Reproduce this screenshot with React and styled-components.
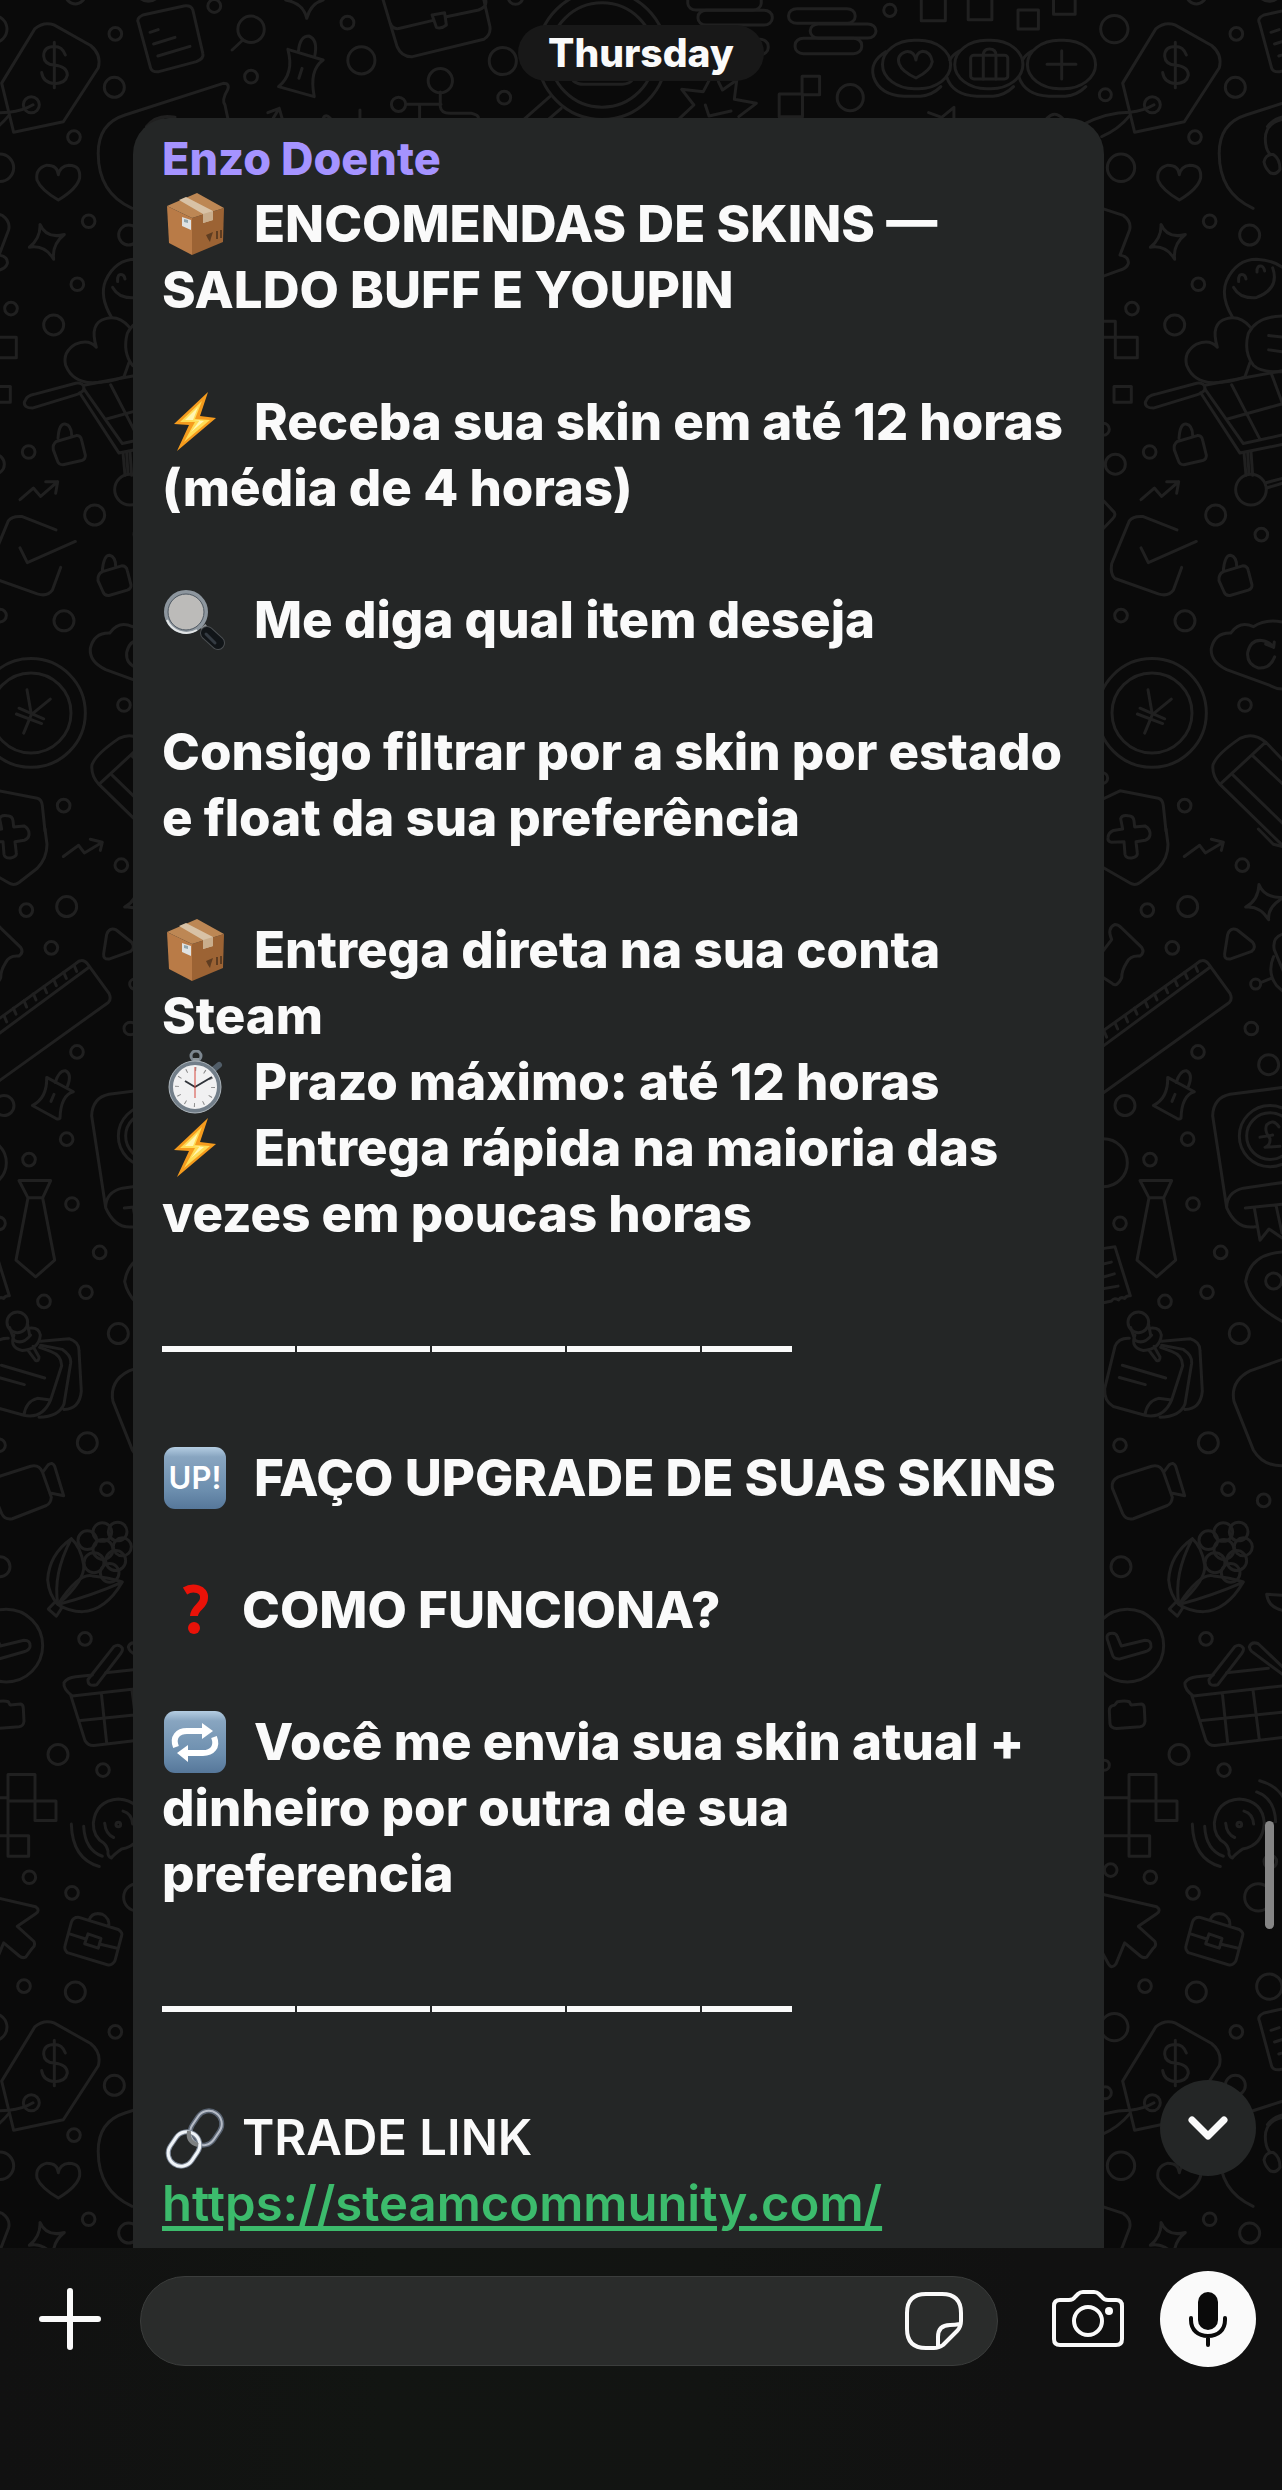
import { useState } from "react";
import styled, { createGlobalStyle } from "styled-components";

const GlobalStyle = createGlobalStyle`
    * {
        box-sizing: border-box;
    }
    body {
        margin: 0;
        background: #0a0a0a;
        font-family: Inter, "Liberation Sans", sans-serif;
    }
`;

const Screen = styled.div`
    display: flex;
    flex-direction: column;
    height: 100vh;
    color: #fafafa;
`;

const Chat = styled.main`
    position: relative;
    flex: 1;
    min-height: 0;
    overflow: hidden;
    display: flex;
    flex-direction: column;
    padding: 25px 178px 0 133px;
`;

const Wallpaper = styled.svg`
    position: absolute;
    inset: 0;
    width: 100%;
    height: 100%;
    z-index: -1;
    fill: none;
    stroke: #202020;
    stroke-width: 3;
    stroke-linecap: round;
    stroke-linejoin: round;

    path, ellipse, rect {
        vector-effect: non-scaling-stroke;
    }
`;

const DayPill = styled.time`
    align-self: center;
    margin: 0 0 37px 45px;
    padding: 0 30px;
    border-radius: 28px;
    background: #181818;
    font-size: 39px;
    font-weight: 800;
    line-height: 56px;
`;

const Bubble = styled.article`
    padding: 13px 29px 0;
    border-radius: 36px;
    background: #242626;
    white-space: nowrap;
`;

const Sender = styled.h2`
    margin: 0 0 4px;
    color: #a593ff;
    font-size: 45px;
    font-weight: 800;
    line-height: 56px;
`;

const Message = styled.div`
    display: flex;
    flex-direction: column;
    gap: 66px;
    padding-bottom: 66px;
    line-height: 66px;
`;

const Paragraph = styled.div``;

const Line = styled.p`
    display: flex;
    align-items: center;
    gap: ${({ $tight }) => ($tight ? 16 : 28)}px;
    height: 66px;
    margin: 0;
    font-size: ${({ $plain }) => ($plain ? 49 : 51)}px;
    font-weight: ${({ $plain }) => ($plain ? 600 : 800)};

    svg {
        flex: none;
        width: 64px;
        height: 64px;
    }
`;

const Divider = styled.hr`
    width: 630px;
    height: 6px;
    margin: 33px 0 27px;
    border: 0;
    background: repeating-linear-gradient(90deg, #fafafa 0 133px, #242626 133px 135px);
`;

const Link = styled.a`
    color: #3cbb6c;
    text-decoration: underline;
    text-decoration-thickness: 5px;
    text-underline-offset: 5px;
`;

const DownButton = styled.button`
    position: absolute;
    right: 26px;
    bottom: 72px;
    display: grid;
    place-items: center;
    width: 96px;
    height: 96px;
    padding: 0;
    border: 0;
    border-radius: 50%;
    background: #242626;
`;

const ScrollThumb = styled.div`
    position: absolute;
    right: 8px;
    bottom: 319px;
    width: 9px;
    height: 108px;
    border-radius: 5px;
    background: #858585;
`;

const Composer = styled.form`
    display: flex;
    align-items: flex-start;
    height: 242px;
    padding: 23px 26px 0 38px;
    background: linear-gradient(90deg, #111 0, #121512 30%, #121412 55%, #111 80%);
`;

const IconButton = styled.button`
    display: grid;
    place-items: center;
    flex: none;
    width: ${({ $width }) => $width}px;
    height: 96px;
    padding: 0;
    border: 0;
    border-radius: 50%;
    background: ${({ $filled }) => ($filled ? "#fafafa" : "none")};
`;

const Actions = styled.div`
    display: flex;
    gap: 36px;
`;

const Field = styled.label`
    display: flex;
    align-items: center;
    flex: 1;
    min-width: 0;
    height: 90px;
    margin: 5px 54px 0 38px;
    padding: 0 33px 0 40px;
    border: 1px solid #3b3d3c;
    border-radius: 45px;
    background: #2a2c2b;
`;

const TextBox = styled.input`
    flex: 1;
    min-width: 0;
    height: 80px;
    border: 0;
    outline: 0;
    background: none;
    color: #fafafa;
    font: 500 46px Inter, "Liberation Sans", sans-serif;
`;

/* ---------- emoji ---------- */

function BoxEmoji() {
    return (
        <svg viewBox="0 0 64 64" aria-hidden="true">
            <path d="M5 14 30 26 30 63 7 51Z" fill="#b97b47" />
            <path d="M30 26 62 16 61 50 30 63Z" fill="#9c6334" />
            <path d="M5 14 35 1 62 16 30 26Z" fill="#bd8754" />
            <path d="M17 8 24 5 51 19 51 28 41 31 41 22Z" fill="#d8c2a6" />
            <path d="M41 22 51 19 51 28 41 31Z" fill="#c9ad8c" />
            <path d="M20 25 29 28 29 38 20 34Z" fill="#dfe2e3" />
            <path d="M22 27 26 28 26 31 22 30Z" fill="#90a5ad" />
            <path d="M44 43 51 40 49 46 48 50 46 47Z" fill="#5f3d21" />
            <path d="M55 39V47M59 38V46" stroke="#5f3d21" strokeWidth="2" />
        </svg>
    );
}

function BoltEmoji() {
    return (
        <svg viewBox="0 0 64 64" aria-hidden="true">
            <path d="M46 2 12 34 27 35 15 61 54 28 38 26Z" fill="#f59b1d" />
            <path d="M40 11 18 32 33 32 22 52 48 30 33 29Z" fill="#ffdc55" />
            <path d="M36 17 23 30 38 30 29 42 42 31 31 30Z" fill="#fff6b0" />
        </svg>
    );
}

function LensEmoji() {
    return (
        <svg viewBox="0 0 64 64" aria-hidden="true">
            <path d="M40 42 45 38" stroke="#8b8f92" strokeWidth="5" />
            <path d="M45 45 56 55" stroke="#4b4f52" strokeWidth="14" strokeLinecap="round" />
            <path d="M45 45 56 55" stroke="#111518" strokeWidth="12" strokeLinecap="round" />
            <path d="M44 46 53 55" stroke="#343b42" strokeWidth="3" strokeLinecap="round" />
            <circle cx="24" cy="24" r="20" fill="#bcbbb9" stroke="#8d969e" strokeWidth="4" />
            <circle cx="24" cy="24" r="18" fill="none" stroke="#4d5761" strokeWidth="1" />
            <path d="M5 32A21 21 0 0 0 35 42" fill="none" stroke="#e1e4e5" strokeWidth="2" />
        </svg>
    );
}

function StopwatchEmoji() {
    return (
        <svg viewBox="0 0 64 64" aria-hidden="true">
            <circle cx="34" cy="6" r="5" fill="none" stroke="#7d8790" strokeWidth="3" />
            <path d="M31 8H37V13H31Z" fill="#8d969d" />
            <path d="M51 20 57 15" stroke="#515d68" strokeWidth="6" strokeLinecap="round" />
            <circle cx="33" cy="37" r="24" fill="#f1f1f2" stroke="#727e89" strokeWidth="4" />
            <circle cx="33" cy="37" r="26" fill="none" stroke="#abb3b9" strokeWidth="1" />
            <circle cx="33" cy="37" r="18" fill="none" stroke="#888" strokeWidth="4" strokeDasharray="1 8.4" />
            <path d="M23 31 33 37 50 27" fill="none" stroke="#30343a" strokeWidth="2" strokeLinejoin="round" />
            <path d="M33 17V48" stroke="#d5463c" strokeWidth="1" />
        </svg>
    );
}

function QuestionEmoji() {
    return (
        <svg viewBox="0 0 64 64" aria-hidden="true">
            <path d="M23 13C31 8 43 11 42 20C42 28 32 30 32 38" fill="none" stroke="#ea1208" strokeWidth="8" />
            <circle cx="32" cy="50" r="6" fill="#ea1208" />
        </svg>
    );
}

function BlueKey({ id, children }) {
    return (
        <svg viewBox="0 0 64 64" aria-hidden="true">
            <linearGradient id={id} x2="0" y2="1">
                <stop offset="0" stopColor="#b4cde2" />
                <stop offset=".16" stopColor="#88a5c0" />
                <stop offset=".7" stopColor="#6c8eae" />
                <stop offset="1" stopColor="#56779a" />
            </linearGradient>
            <rect x="2" y="1" width="62" height="62" rx="11" fill={`url(#${id})`} />
            {children}
        </svg>
    );
}

function UpEmoji() {
    return (
        <BlueKey id="upKey">
            <text x="33" y="43" fill="#fff" fontFamily="Inter" fontSize="31" fontWeight="600" textAnchor="middle">UP!</text>
        </BlueKey>
    );
}

function RepeatEmoji() {
    return (
        <BlueKey id="repeatKey">
            <path d="M14 37C10 27 16 21 25 21H44M52 27C56 37 50 43 41 43H22" fill="none" stroke="#fff" strokeWidth="6" />
            <path d="M40 13 51 21 40 29ZM26 35 15 43 26 52Z" fill="#fff" />
        </BlueKey>
    );
}

function ChainEmoji() {
    return (
        <svg viewBox="0 0 64 64" aria-hidden="true">
            <g fill="none">
                <rect x="31" y="4" width="26" height="36" rx="13" transform="rotate(34 44 22)" stroke="#596371" strokeWidth="5" />
                <rect x="31" y="4" width="26" height="36" rx="13" transform="rotate(34 44 22)" stroke="#b5bbc6" strokeWidth="2" />
                <rect x="9" y="25" width="26" height="36" rx="13" transform="rotate(34 22 43)" stroke="#7b8695" strokeWidth="5" />
                <rect x="9" y="25" width="26" height="36" rx="13" transform="rotate(34 22 43)" stroke="#f0f4f8" strokeWidth="3" />
                <path d="M27 25Q25 36 36 39" stroke="#7d8081" strokeWidth="4" />
            </g>
        </svg>
    );
}

/* ---------- wallpaper ---------- */

// each part of the tile has its own grid; [x, y, radius] in that grid
const PARTS = [
    {
        transform: "translate(-41 0) scale(.3333 .5293)",
        ratio: 0.63,
        rings: [
            [103, 55, 41], [469, 64, 19], [76, 179, 18], [466, 165, 30], [217, 198, 24], [345, 259, 19],
            [123, 317, 41], [389, 418, 19], [509, 444, 30], [355, 537, 19], [156, 583, 19], [284, 614, 30],
            [209, 854, 19], [106, 877, 30], [407, 973, 30], [544, 1010, 19], [123, 1163, 19], [315, 1173, 30],
            [216, 1347, 163], [216, 1347, 120], [495, 1332, 19], [314, 1522, 19], [513, 925, 46], [70, 811, 18], [67, 1470, 16],
        ],
        paths: [
            "M128 157L228 54Q255 40 285 47L395 86Q428 103 418 128L313 230L164 250Z",
            "M319 104Q310 88 286 88Q254 88 254 106Q256 122 286 123Q325 126 325 142Q320 158 286 158Q252 156 248 137M286 80V166",
            "M10 235Q80 212 150 212Q190 210 222 198M65 258Q115 245 150 218",
            "M298 330Q296 312 264 312Q228 318 234 340Q245 358 298 378Q355 356 362 336Q365 312 330 312Q302 314 298 330Z",
            "M243 424Q262 452 316 443Q278 462 284 490Q258 462 211 467Q245 450 243 424Z",
            "M612 225Q556 232 556 262Q556 280 568 290M552 306Q558 290 580 292Q600 300 600 320Q588 332 570 326Q556 318 552 306Z",
            "M40 390L72 395L130 407Q155 418 149 434L120 482Q148 485 145 498Q140 507 122 510L60 524",
            "M458 600Q420 560 440 530Q470 490 530 490Q590 492 620 512M461 543Q480 565 530 562Q600 545 578 506",
            "M476 532Q474 516 490 519Q496 520 498 527M531 514Q530 500 546 503Q552 505 554 512",
            "M412 656Q390 610 440 602Q480 595 511 618M412 656Q390 640 350 650Q310 665 320 690Q340 722 400 723Q450 723 495 712L510 685",
            "M612 597Q530 597 505 630Q490 665 520 690Q545 705 612 702M566 634L612 637M566 661L612 665",
            "M60 607H106V637H60M106 637H172V676H106ZM102 730H154V760H102Z",
            "M200 755Q205 748 225 745L350 724Q375 722 375 735Q370 742 350 746L220 771Q195 771 196 760Z",
            "M375 735L490 838L620 820M362 742L480 856L620 838M375 728L440 720L612 700M455 727L540 830M573 704L612 770M440 792L612 762",
            "M492 855L498 898M503 855L507 895M513 853L518 898M558 912L612 903M560 922L612 912",
            "M283 850Q280 840 292 834L352 823Q365 822 368 832L379 860Q380 868 368 870L312 878Q298 878 295 870ZM297 828Q300 800 318 801Q338 803 338 823",
            "M183 944L223 922L245 938L296 910M260 910H296L290 932",
            "M60 942L72 947L103 968Q108 974 98 980L60 1005",
            "M291 1001L190 976Q160 974 148 984L95 1065Q90 1085 105 1093L235 1122Q265 1128 280 1115L305 1072M183 1035L205 1063L349 1023",
            "M417 1097Q415 1085 430 1080L488 1069Q502 1069 505 1078L516 1105Q517 1112 505 1115L450 1125Q436 1126 432 1118ZM430 1077Q435 1048 452 1049Q470 1052 470 1070",
            "M612 1302Q590 1302 570 1295L440 1265Q390 1250 394 1225Q405 1195 452 1196Q480 1172 520 1184Q560 1168 612 1176",
            "M584 1241Q570 1264 535 1262Q500 1255 503 1233Q512 1208 545 1210Q570 1212 580 1223M557 1217L581 1223L583 1213",
            "M204 1303L217 1350L274 1321M217 1350L194 1385M180 1338L254 1358M172 1349L248 1367",
            "M612 1438L557 1402L420 1482Q395 1465 399 1445Q410 1425 480 1395Q520 1382 557 1402M517 1427L640 1500M457 1463L640 1575M420 1482L612 1600",
            "M60 1512L120 1494L235 1508Q248 1510 250 1522L258 1570",
        ],
    },
    {
        transform: "translate(-41 830) scale(.3333 .5102)",
        ratio: 0.653,
        rings: [
            [487, 69, 19], [323, 150, 30], [202, 157, 19], [277, 231, 19], [527, 302, 15], [514, 389, 19],
            [354, 435, 19], [566, 460, 30], [135, 540, 30], [323, 606, 19], [210, 646, 19], [339, 733, 19],
            [120, 771, 19], [422, 828, 19], [255, 924, 19], [381, 906, 19], [478, 987, 30], [120, 1206, 19],
            [385, 1201, 30], [444, 1292, 19], [551, 1314, 19], [123, 1444, 30], [70, 652, 72], [581, 884, 24],
            [570, 600, 92], [570, 600, 70], [175, 965, 31],
            [385, 1392, 28], [430, 1376, 28], [476, 1375, 28], [490, 1405, 27], [432, 1410, 30], [470, 1432, 30], [405, 1436, 30], [452, 1456, 28],
        ],
        paths: [
            "M258 -2L264 28Q264 55 235 75L180 103Q165 110 150 104L60 70",
            "M84 15Q85 5 100 1L128 -2L122 -22Q125 -30 145 -28Q160 -28 162 -18L164 -6L195 -8Q212 -2 210 10Q208 18 196 20L168 23L172 45Q174 52 155 55Q138 56 135 48L132 23L95 24Q82 22 84 15Z",
            "M313 52L359 30L376 45L430 24M394 18L430 24L424 40M535 -2L580 28L612 33",
            "M537 107Q555 135 612 132Q562 150 566 176Q540 148 497 151Q535 138 537 107Z",
            "M443 205Q450 190 472 196L518 220Q530 230 515 238L450 253Q432 254 434 242Z",
            "M60 245L95 215Q80 192 105 185Q115 185 125 192L185 230Q195 240 180 247Q150 245 140 260Q125 275 125 290Q110 310 95 300L60 285",
            "M612 203Q575 210 583 235L612 280M581 248Q560 280 590 305L612 318M542 299L573 291",
            "M60 398L350 262Q370 250 385 262L450 320Q458 332 448 338L60 520M60 428L388 270",
            "M72 394l8 12M105 378l8 12M135 364l8 12M163 349l8 12M195 335l8 12M223 321l8 12M255 307l8 12M284 293l8 12M314 279l8 12M345 265l8 12",
            "M263 485L343 513Q305 520 303 565Q300 568 290 565L220 540Q265 525 263 485M289 495Q300 470 320 472Q340 478 325 503M285 518L276 532",
            "M180 687H275L251 721H207ZM207 721L171 843L230 876L287 843L251 721",
            "M640 502L450 518Q400 525 398 560L440 740Q470 785 530 777M440 740Q440 710 490 702L640 688M496 741L612 733M523 741L540 804L567 782L612 802M588 735L606 790",
            "M597 582Q580 565 560 578Q552 590 570 605Q572 618 555 622L600 620M540 602L578 598",
            "M60 826L72 820L105 817L151 913Q140 912 134 918Q122 914 116 921Q100 916 95 923L60 928M60 852L94 847M60 878L103 870M60 900L114 894",
            "M612 827Q510 830 497 885Q510 930 612 965",
            "M148 996Q115 995 105 1012L74 1095Q72 1120 100 1130L195 1147Q250 1155 275 1117L308 1050Q308 1030 275 1022L242 1014M195 1147Q200 1120 235 1114L275 1117",
            "M245 1010L310 1018Q338 1030 335 1045L315 1125Q300 1150 240 1151M245 1002L330 997Q360 1003 360 1020L367 1100Q362 1135 315 1136M127 1049L257 1074M118 1073L196 1087",
            "M152 975L165 1000M205 967L212 990M165 990Q150 1015 190 1020Q240 1018 244 990Q240 975 215 976M165 1000Q190 1010 215 990M207 1020L230 1040Q240 1042 240 1033L222 1012",
            "M97 1290Q93 1275 115 1268L215 1247Q240 1243 250 1258L277 1308Q275 1320 262 1324L160 1350Q138 1353 128 1340ZM252 1258L268 1244Q280 1238 287 1247L314 1305L278 1300",
            "M640 1030L510 1060Q450 1080 462 1120L520 1215Q550 1248 612 1246",
            "M337 1389Q270 1420 266 1470Q270 1500 297 1518Q380 1470 374 1440Q365 1405 337 1389Q280 1460 297 1518",
            "M297 1518Q360 1455 400 1462Q450 1465 490 1474Q440 1530 370 1532Q330 1532 297 1518Q400 1500 490 1474M268 1527L288 1513L309 1524L292 1541Z",
            "M612 1500L560 1498Q565 1525 612 1530",
        ],
    },
    {
        transform: "translate(-41 1600) scale(.3333 .4464)",
        ratio: 0.747,
        rings: [
            [378, 87, 19], [297, 346, 30], [432, 381, 19], [92, 605, 19], [211, 621, 19], [339, 656, 19],
            [535, 666, 41], [571, 586, 19], [195, 865, 19], [349, 878, 30], [142, 102, 109], [478, 503, 7], [73, 370, 15], [568, 866, 38],
        ],
        paths: [
            "M85 95Q75 78 90 75Q108 72 112 82L124 103L195 90Q215 90 213 105Q210 113 195 116L120 132Q100 133 97 122Z",
            "M88 248Q88 237 103 236L112 228Q135 225 148 228L153 235L185 233Q193 235 193 243L195 272Q193 283 180 284L110 288Q92 287 90 278Z",
            "M340 215Q312 200 315 185Q325 174 350 172L400 168M440 163L565 153M340 215L612 192M335 213L378 315Q388 327 405 326L620 307M365 270L612 251M427 208L443 320M519 201L538 313",
            "M387 178L465 104Q480 97 490 108Q492 113 485 120L413 190Q385 195 387 178ZM612 153L535 98Q515 92 508 105Q510 112 515 115L612 169",
            "M60 443H147M60 528H147M147 391H228V450H147ZM147 450V574H209V528H147M228 450H291V494H228Z",
            "M435 545Q402 530 403 500Q410 450 478 446Q548 450 553 500Q548 550 488 558Q465 570 457 578Q445 575 447 562Q443 550 435 545Z",
            "M437 500Q440 525 464 532M492 473Q518 478 521 502M374 507Q378 560 430 574M337 502Q340 580 421 597M530 430Q585 445 587 497M539 405Q590 415 612 445",
            "M60 658L230 687Q245 695 230 703L175 731L225 765Q230 775 220 780L200 800Q190 803 182 798L134 768L108 815Q95 828 85 815L60 780",
            "M337 722Q343 710 360 711L478 738Q492 745 488 752L468 808Q460 820 445 817L325 790Q315 782 318 775ZM332 748L382 760M424 771L475 780M387 748L426 758L418 780L377 770ZM390 717Q400 698 430 704Q452 712 450 732",
        ],
    },
    {
        transform: "scale(.3571 .3333)",
        ratio: 1.071,
        rings: [
            [600, 18, 18], [703, 230, 18], [973, 68, 18], [1012, 181, 38], [1408, 183, 38], [1412, 293, 18],
            [703, 88, 37], [1233, 242, 34], [1116, 313, 20],
        ],
        paths: [
            "M388 70Q380 55 400 45L515 18Q535 15 540 30L568 160Q572 175 550 185L445 215Q428 218 422 205ZM420 97L443 89M430 132L490 112M442 168L532 139",
            "M370 625Q275 580 275 460Q275 370 350 345L625 250Q645 250 637 270Q620 300 630 315L638 355M410 380Q440 340 490 352",
            "M680 120L650 150M800 0Q850 10 859 55Q870 10 905 0",
            "M806 148L905 180Q865 210 880 290L780 260Q825 220 806 148M836 152Q840 108 865 108Q890 118 882 165M846 205L837 235",
            "M1073 0L1112 140Q1125 172 1155 170L1355 118Q1375 105 1372 80L1355 0M1093 70Q1100 90 1120 85L1210 62M1250 50L1340 30Q1365 20 1360 0M1210 45L1245 38L1250 75Q1235 88 1222 82Z",
            "M1136 313H1235M1233 276V320Q1235 340 1260 340H1320Q1340 345 1340 355M1175 313V355",
            "M750 338L782 325L790 355M782 325L765 355M905 355Q912 340 925 355M1008 330V355",
        ],
    },
    {
        transform: "translate(500 0) scale(.4082 .3333)",
        ratio: 1.224,
        rings: [[250, 165, 158], [250, 165, 128], [955, 31, 15], [858, 293, 32], [38, -9, 18]],
        rects: [
            [937, 121, 167, 145, 78], [1114, 121, 167, 145, 78], [1292, 121, 167, 145, 78], [1153, 166, 91, 71, 8],
            [707, 26, 163, 44, 20], [760, 72, 161, 42, 20], [723, 115, 163, 46, 20], [485, 31, 182, 44, 20], [460, -20, 180, 50, 20], [475, 118, 182, 46, 20],
            [1032, -20, 59, 82, 0], [1147, -20, 58, 79, 0], [1269, 30, 50, 57, 0], [1356, -10, 53, 53, 0], [684, 282, 57, 68, 0], [740, 229, 43, 55, 0],
        ],
        paths: [
            "M945 155Q905 185 915 230Q930 285 990 289H1030Q1060 285 1080 260",
            "M1094 230Q1108 285 1168 289H1208Q1238 285 1258 260M1271 230Q1285 285 1345 289H1385Q1415 285 1435 260M1125 153Q1108 165 1102 180M1303 153Q1286 165 1280 180",
            "M1019 180Q1015 153 995 155Q970 165 978 192Q985 215 1019 234Q1055 212 1059 185Q1055 155 1035 154Q1020 158 1019 180",
            "M1184 166V237M1215 166V237M1184 166Q1184 147 1199 147Q1215 147 1215 166M1376 152V237M1340 193H1411",
            "M440 355L475 315L445 268L498 275L515 235M535 245L545 270L580 240L574 298L628 310L585 350M503 315L512 348L566 333",
            "M122 290L60 357M150 325L120 357M180 243Q190 253 205 253H300Q318 250 322 243M1050 338L1082 352L1112 322V355M1340 355Q1358 330 1378 355",
        ],
    },
];

function Doodles() {
    return (
        <Wallpaper aria-hidden="true">
            <defs>
                <g id="doodles">
                    {PARTS.map((part) => (
                        <g key={part.transform} transform={part.transform}>
                            {part.rings.map(([x, y, r]) => (
                                <ellipse key={`${x}-${y}-${r}`} cx={x} cy={y} rx={r} ry={r * part.ratio} />
                            ))}
                            {(part.rects || []).map(([x, y, w, h, r]) => (
                                <rect key={`${x}-${y}`} x={x} y={y} width={w} height={h} rx={r} />
                            ))}
                            {part.paths.map((d) => (
                                <path key={d} d={d} />
                            ))}
                        </g>
                    ))}
                </g>
            </defs>
            {[-1998, 0, 1998].map((y) =>
                [0, 1121].map((x) => <use key={`${x}${y}`} href="#doodles" x={x} y={y} />)
            )}
        </Wallpaper>
    );
}

function App() {

    const [text, setText] = useState('');

    const textHandler = (e) => {
        setText(e.target.value);
    }

    const submitHandler = (e) => {
        e.preventDefault();
        setText('');
    }

    return (
        <Screen>
            <GlobalStyle />
            <Chat>
                <Doodles />
                <DayPill>Thursday</DayPill>
                <Bubble>
                    <Sender>Enzo Doente</Sender>
                    <Message>
                        <Paragraph>
                            <Line><BoxEmoji />ENCOMENDAS DE SKINS —</Line>
                            <Line>SALDO BUFF E YOUPIN</Line>
                        </Paragraph>
                        <Paragraph>
                            <Line><BoltEmoji />Receba sua skin em até 12 horas</Line>
                            <Line>(média de 4 horas)</Line>
                        </Paragraph>
                        <Line><LensEmoji />Me diga qual item deseja</Line>
                        <Paragraph>
                            <Line>Consigo filtrar por a skin por estado</Line>
                            <Line>e float da sua preferência</Line>
                        </Paragraph>
                        <Paragraph>
                            <Line><BoxEmoji />Entrega direta na sua conta</Line>
                            <Line>Steam</Line>
                            <Line><StopwatchEmoji />Prazo máximo: até 12 horas</Line>
                            <Line><BoltEmoji />Entrega rápida na maioria das</Line>
                            <Line>vezes em poucas horas</Line>
                        </Paragraph>
                        <Divider />
                        <Line><UpEmoji />FAÇO UPGRADE DE SUAS SKINS</Line>
                        <Line $tight><QuestionEmoji />COMO FUNCIONA?</Line>
                        <Paragraph>
                            <Line><RepeatEmoji />Você me envia sua skin atual +</Line>
                            <Line>dinheiro por outra de sua</Line>
                            <Line>preferencia</Line>
                        </Paragraph>
                        <Divider />
                        <Paragraph>
                            <Line $tight $plain><ChainEmoji />TRADE LINK</Line>
                            <Line $plain><Link href="https://steamcommunity.com/">https://steamcommunity.com/</Link></Line>
                        </Paragraph>
                    </Message>
                </Bubble>
                <ScrollThumb />
                <DownButton type="button" aria-label="Scroll to bottom">
                    <svg width="44" height="32" viewBox="0 0 44 32" fill="none" stroke="#fafafa" strokeWidth="7" strokeLinecap="round" strokeLinejoin="round">
                        <path d="M6 8 22 24 38 8" />
                    </svg>
                </DownButton>
            </Chat>
            <Composer onSubmit={submitHandler}>
                <IconButton type="button" aria-label="Add" $width={64}>
                    <svg width="64" height="64" viewBox="0 0 64 64" stroke="#fafafa" strokeWidth="6" strokeLinecap="round">
                        <path d="M32 4V60M4 32H60" />
                    </svg>
                </IconButton>
                <Field>
                    <TextBox type="text" aria-label="Message" value={text} onChange={textHandler} />
                    <svg width="60" height="60" viewBox="0 0 60 60" fill="none" stroke="#fafafa" strokeWidth="4" strokeLinejoin="round">
                        <path d="M22 3H38Q57 3 57 22V30Q57 36 53 40L39 54Q35 57 30 57H22Q3 57 3 38V22Q3 3 22 3ZM34 56V46Q34 34 46 34Q51 34 56 33" />
                    </svg>
                </Field>
                <Actions>
                    <IconButton type="button" aria-label="Camera" $width={72}>
                        <svg width="72" height="60" viewBox="0 0 72 60" fill="none" stroke="#fafafa" strokeWidth="4" strokeLinejoin="round">
                            <path d="M8 11H17Q21 11 23 8L26 5Q28 3 31 3H42Q45 3 47 5L50 8Q52 11 56 11H64Q70 11 70 17V50Q70 56 64 56H8Q2 56 2 50V17Q2 11 8 11Z" />
                            <circle cx="36" cy="32" r="14" />
                            <circle cx="57" cy="22" r="4" fill="#fafafa" stroke="none" />
                        </svg>
                    </IconButton>
                    <IconButton type="button" aria-label="Record voice message" $width={96} $filled>
                        <svg width="40" height="58" viewBox="0 0 40 58" fill="none" stroke="#0a0a0a" strokeWidth="4" strokeLinecap="round">
                            <rect x="10" y="2" width="20" height="38" rx="10" fill="#0a0a0a" stroke="none" />
                            <path d="M3 28V30C3 40 10 46 20 46S37 40 37 30V28M20 46V55" />
                        </svg>
                    </IconButton>
                </Actions>
            </Composer>
        </Screen>
    );
}

export default App;
